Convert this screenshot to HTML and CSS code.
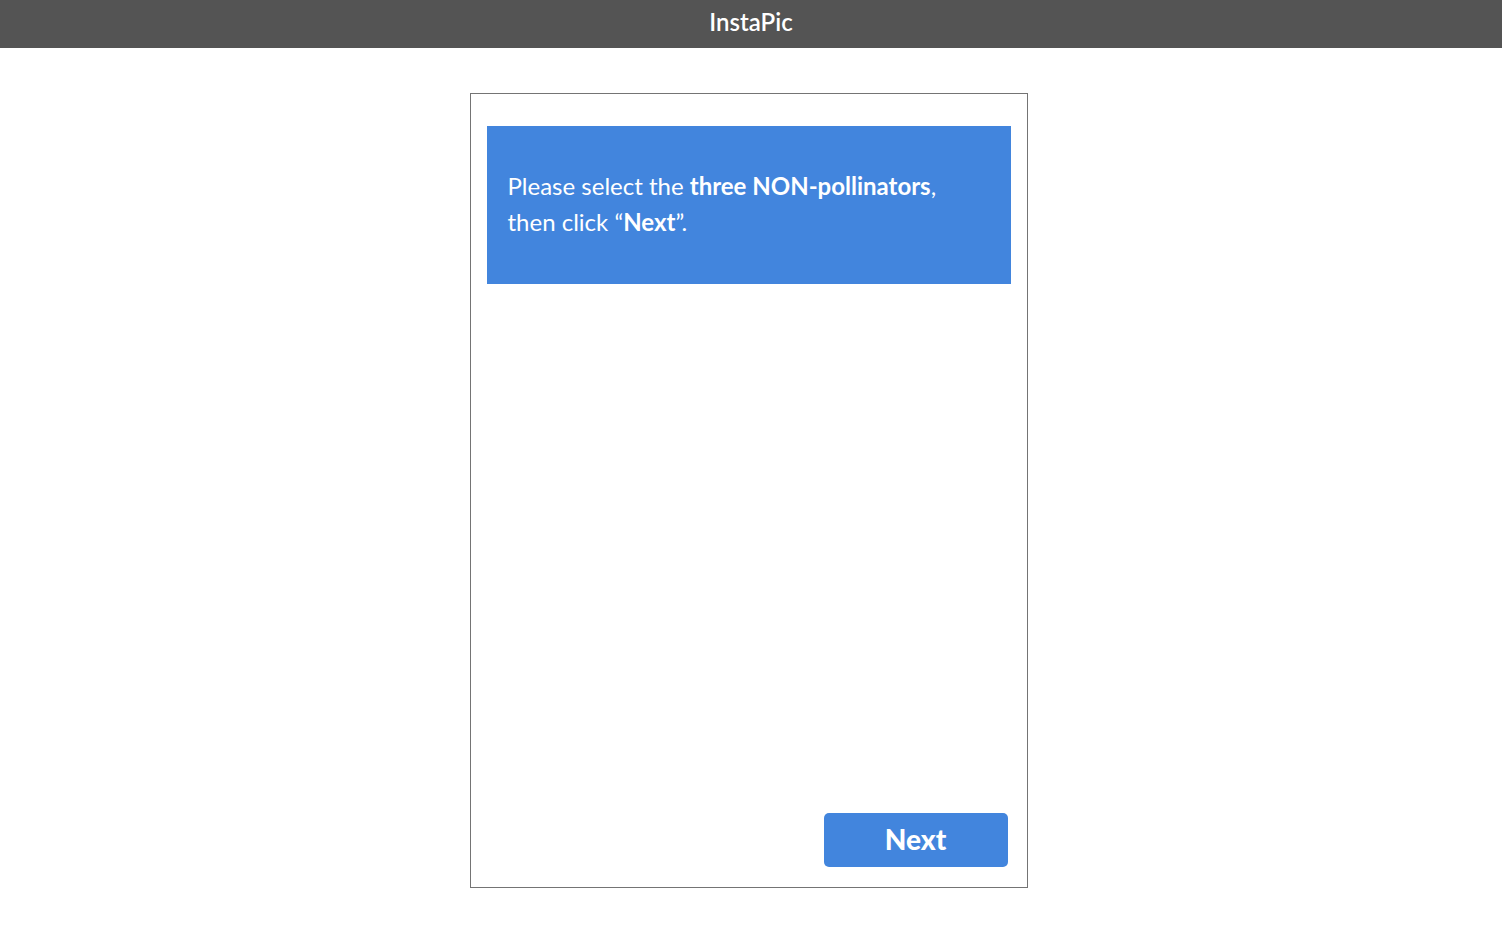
FILE: index.html
```html
<!DOCTYPE html>
<html lang="en">
<head>
<meta charset="utf-8">
<title>InstaPic</title>
<link rel="stylesheet" href="styles.css">
</head>
<body>
<header class="topbar">InstaPic</header>
<main class="stage">
  <section class="card">
    <div class="prompt">
      <p>Please select the <strong>three NON-pollinators</strong>,<br>then click “<strong>Next</strong>”.</p>
    </div>
    <div class="grid-area"></div>
    <div class="actions">
      <button class="next-btn" type="button">Next</button>
    </div>
  </section>
</main>
</body>
</html>
```

FILE: styles.css
```css
* { box-sizing: border-box; }
html, body { margin: 0; padding: 0; background: #fff; }
body {
  font-family: Lato, "Open Sans", "Liberation Sans", sans-serif;
  color: #222;
}
.topbar {
  height: 48px;
  background: #545454;
  color: #fff;
  font-weight: 600;
  font-size: 24px;
  display: flex;
  align-items: center;
  justify-content: center;
  padding-bottom: 5px;
}
.stage {
  display: flex;
  justify-content: center;
  padding: 45px 5px 0 0;
}
.card {
  width: 558px;
  height: 795px;
  border: 1px solid #747474;
  padding: 32px 16px 20px 16px;
  display: flex;
  flex-direction: column;
}
.prompt {
  background: #4285dd;
  color: #fff;
  height: 158px;
  padding: 0 21px;
  display: flex;
  align-items: center;
}
.prompt p {
  margin: 0;
  font-size: 24px;
  line-height: 36px;
  padding-bottom: 2px;
}
.prompt strong { font-weight: 700; }
.grid-area { flex: 1; }
.actions {
  display: flex;
  justify-content: flex-end;
  padding-right: 3px;
}
.next-btn {
  width: 184px;
  height: 54px;
  border: none;
  border-radius: 5px;
  background: #4285dd;
  color: #fff;
  font-family: inherit;
  font-weight: 900;
  font-size: 28px;
  padding: 0 0 2px 0;
}
```
